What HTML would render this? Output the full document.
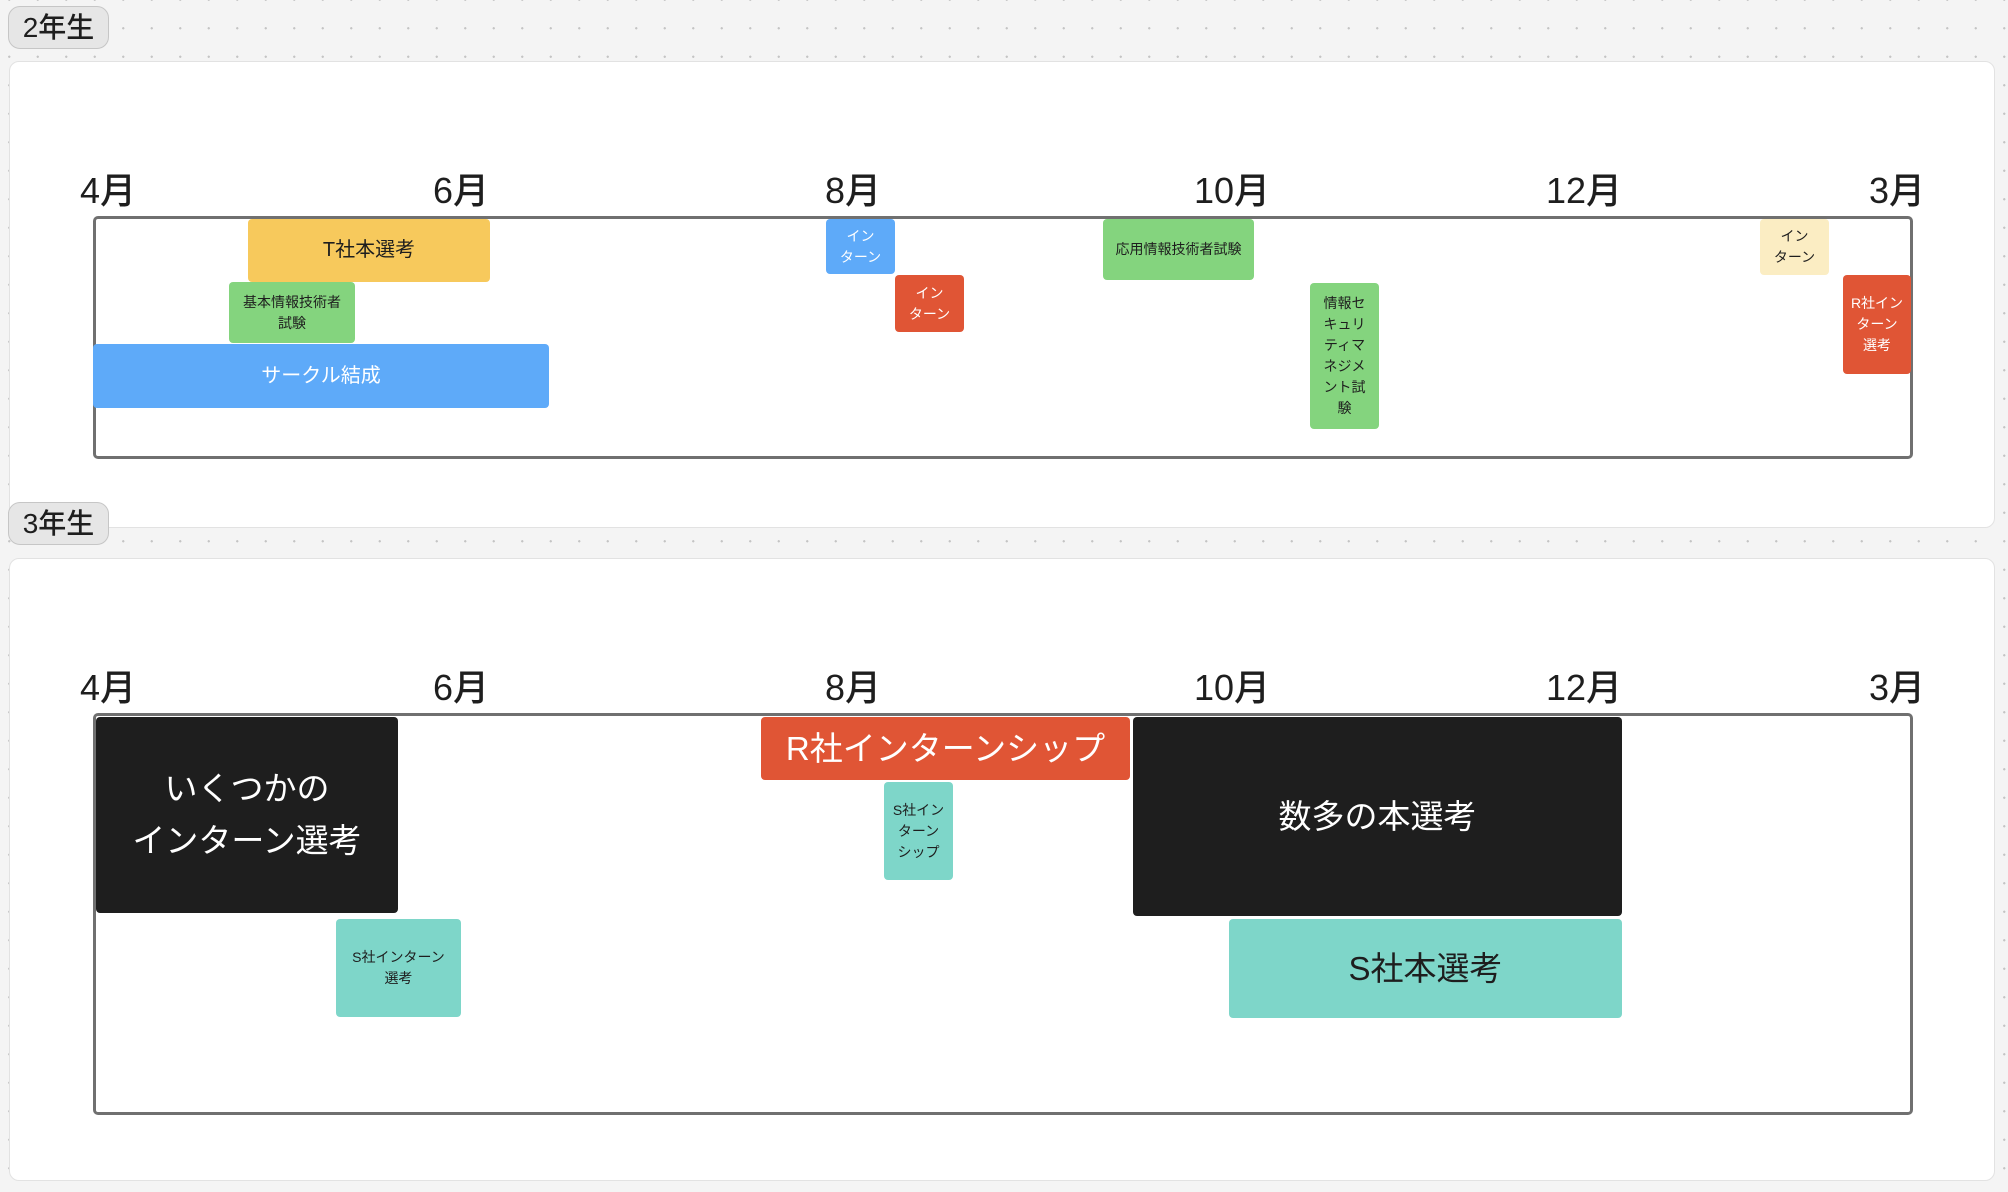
<!DOCTYPE html>
<html><head><meta charset="utf-8"><style>
*{margin:0;padding:0;box-sizing:border-box}
body{width:2008px;height:1192px;overflow:hidden;position:relative;background-color:#f4f4f4;
background-image:radial-gradient(circle,#c4c4c4 1px,transparent 1.3px);background-size:28.5px 28.5px;background-position:-5px 14px;
font-family:"Liberation Sans","Noto Sans CJK JP",sans-serif;color:#1e1e1e}
.lab{position:absolute;left:8px;width:101px;height:43px;background:#e6e6e6;border:1px solid #c6c6c6;border-radius:12px;font-size:28px;line-height:41px;text-align:center;font-weight:500}
.panel{position:absolute;left:9px;width:1986px;background:#fff;border:1px solid #e2e2e2;border-radius:10px}
.tl{position:absolute;left:93px;width:1820px;border:3px solid #707070;border-radius:5px}
.m{position:absolute;font-size:36px;width:120px;margin-left:-60px;text-align:center;line-height:40px;font-weight:500}
.e{position:absolute;display:flex;align-items:center;justify-content:center;text-align:center;border-radius:4px;font-size:14px;line-height:21px;padding:2px}
.y{background:#f7c95c}.g{background:#84d47e}.b{background:#5eaaf9;color:#fff}.r{background:#e05535;color:#fff}.ly{background:#fbedc3}.k{background:#1e1e1e;color:#fff}.t{background:#7ed6c9}
</style></head><body>
<div class="lab" style="top:6px">2年生</div>
<div class="panel" style="top:61px;height:467px"></div>
<div class="lab" style="top:502px">3年生</div>
<div class="panel" style="top:558px;height:623px"></div>

<div class="m" style="left:108px;top:171px">4月</div>
<div class="m" style="left:461px;top:171px">6月</div>
<div class="m" style="left:853px;top:171px">8月</div>
<div class="m" style="left:1232px;top:171px">10月</div>
<div class="m" style="left:1584px;top:171px">12月</div>
<div class="m" style="left:1897px;top:171px">3月</div>
<div class="tl" style="top:216px;height:243px"></div>
<div class="e y" style="left:248px;top:219px;width:242px;height:63px;font-size:20px">T社本選考</div>
<div class="e g" style="left:229px;top:282px;width:126px;height:61px">基本情報技術者<br>試験</div>
<div class="e b" style="left:93px;top:344px;width:456px;height:64px;font-size:20px">サークル結成</div>
<div class="e b" style="left:826px;top:219px;width:69px;height:55px">イン<br>ターン</div>
<div class="e r" style="left:895px;top:275px;width:69px;height:57px">イン<br>ターン</div>
<div class="e g" style="left:1103px;top:219px;width:151px;height:61px">応用情報技術者試験</div>
<div class="e g" style="left:1310px;top:283px;width:69px;height:146px">情報セ<br>キュリ<br>ティマ<br>ネジメ<br>ント試<br>験</div>
<div class="e ly" style="left:1760px;top:219px;width:69px;height:56px">イン<br>ターン</div>
<div class="e r" style="left:1843px;top:275px;width:68px;height:99px">R社イン<br>ターン<br>選考</div>

<div class="m" style="left:108px;top:668px">4月</div>
<div class="m" style="left:461px;top:668px">6月</div>
<div class="m" style="left:853px;top:668px">8月</div>
<div class="m" style="left:1232px;top:668px">10月</div>
<div class="m" style="left:1584px;top:668px">12月</div>
<div class="m" style="left:1897px;top:668px">3月</div>
<div class="tl" style="top:713px;height:402px"></div>
<div class="e k" style="left:96px;top:717px;width:302px;height:196px;font-size:33px;line-height:52px">いくつかの<br>インターン選考</div>
<div class="e t" style="left:336px;top:919px;width:125px;height:98px">S社インターン<br>選考</div>
<div class="e r" style="left:761px;top:717px;width:369px;height:63px;font-size:33px">R社インターンシップ</div>
<div class="e t" style="left:884px;top:782px;width:69px;height:98px">S社イン<br>ターン<br>シップ</div>
<div class="e k" style="left:1133px;top:717px;width:489px;height:199px;font-size:33px">数多の本選考</div>
<div class="e t" style="left:1229px;top:919px;width:393px;height:99px;font-size:33px">S社本選考</div>
</body></html>
